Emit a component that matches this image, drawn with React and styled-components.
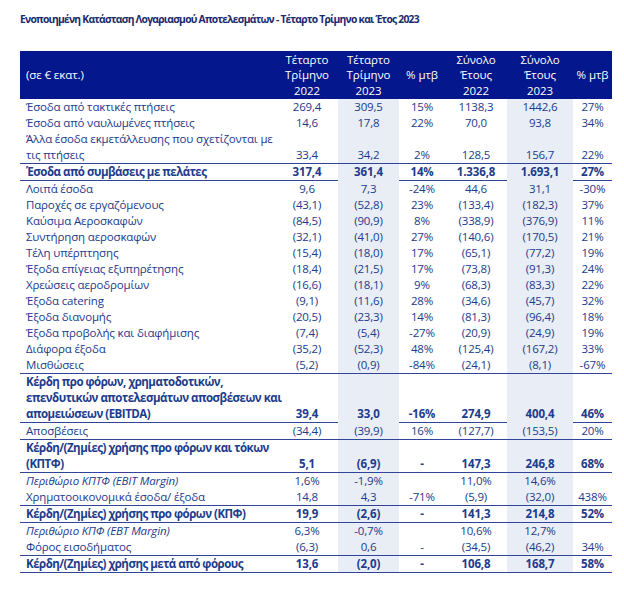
import React from 'react';
import styled, { createGlobalStyle } from 'styled-components';

const GlobalStyle = createGlobalStyle`
	body {
		margin: 0;
		background: #ffffff;
		font-family: "Open Sans", "Noto Sans", sans-serif;
	}
`;

const Page = styled.div`
	padding: 11px 12px 8px 20px;
	width: 592px;
`;

const Title = styled.h1`
	margin: 0 0 24px 0;
	font-size: 10.3px;
	line-height: 16px;
	font-weight: 700;
	letter-spacing: -0.75px;
	color: #1b2a6e;
`;

const Table = styled.table`
	width: 592px;
	border-collapse: collapse;
	table-layout: fixed;
	font-size: 11.5px;
	color: #213b8c;
`;

const HeadCell = styled.th`
	background: #04178c;
	color: #ffffff;
	font-weight: 400;
	line-height: 15.5px;
	letter-spacing: -0.1px;
	padding: 0;
	height: 48px;
	text-align: ${(p) => (p.$left ? 'left' : 'center')};
	padding-left: ${(p) => (p.$left ? '6px' : '0')};
	vertical-align: middle;
`;

const Row = styled.tr`
	font-weight: ${(p) => (p.$bold ? 700 : 400)};
`;

const LabelCell = styled.td`
	padding: 0 0 0 6px;
	line-height: 16px;
	letter-spacing: ${(p) => (p.$bold ? '-0.5px' : '-0.15px')};
	font-style: ${(p) => (p.$italic ? 'italic' : 'normal')};
	border-bottom: ${(p) => (p.$line ? '1.5px solid #30449a' : '0')};
	vertical-align: bottom;
	white-space: nowrap;
`;

const NumCell = styled.td`
	padding: 0;
	line-height: 16px;
	letter-spacing: -0.15px;
	text-align: center;
	vertical-align: bottom;
	background: ${(p) => (p.$shade ? '#e9edf6' : 'transparent')};
	border-bottom: ${(p) =>
		p.$line ? (p.$shade && p.$gap ? '1.5px solid #e9edf6' : '1.5px solid #30449a') : '0'};
`;

const columns = [256, 62, 61, 46, 62, 66, 39];
const shaded = [false, true, false, false, true, false];

const rows = [
	{ label: ['Έσοδα από τακτικές πτήσεις'], v: ['269,4', '309,5', '15%', '1138,3', '1442,6', '27%'] },
	{ label: ['Έσοδα από ναυλωμένες πτήσεις'], v: ['14,6', '17,8', '22%', '70,0', '93,8', '34%'] },
	{ label: ['Άλλα έσοδα εκμετάλλευσης που σχετίζονται με', 'τις πτήσεις'], v: ['33,4', '34,2', '2%', '128,5', '156,7', '22%'], line: true },
	{ label: ['Έσοδα από συμβάσεις με πελάτες'], v: ['317,4', '361,4', '14%', '1.336,8', '1.693,1', '27%'], bold: true, line: true, gap: true },
	{ label: ['Λοιπά έσοδα'], v: ['9,6', '7,3', '-24%', '44,6', '31,1', '-30%'] },
	{ label: ['Παροχές σε εργαζόμενους'], v: ['(43,1)', '(52,8)', '23%', '(133,4)', '(182,3)', '37%'] },
	{ label: ['Καύσιμα Αεροσκαφών'], v: ['(84,5)', '(90,9)', '8%', '(338,9)', '(376,9)', '11%'] },
	{ label: ['Συντήρηση αεροσκαφών'], v: ['(32,1)', '(41,0)', '27%', '(140,6)', '(170,5)', '21%'] },
	{ label: ['Τέλη υπέρπτησης'], v: ['(15,4)', '(18,0)', '17%', '(65,1)', '(77,2)', '19%'] },
	{ label: ['Έξοδα επίγειας εξυπηρέτησης'], v: ['(18,4)', '(21,5)', '17%', '(73,8)', '(91,3)', '24%'] },
	{ label: ['Χρεώσεις αεροδρομίων'], v: ['(16,6)', '(18,1)', '9%', '(68,3)', '(83,3)', '22%'] },
	{ label: ['Έξοδα catering'], v: ['(9,1)', '(11,6)', '28%', '(34,6)', '(45,7)', '32%'] },
	{ label: ['Έξοδα διανομής'], v: ['(20,5)', '(23,3)', '14%', '(81,3)', '(96,4)', '18%'] },
	{ label: ['Έξοδα προβολής και διαφήμισης'], v: ['(7,4)', '(5,4)', '-27%', '(20,9)', '(24,9)', '19%'] },
	{ label: ['Διάφορα έξοδα'], v: ['(35,2)', '(52,3)', '48%', '(125,4)', '(167,2)', '33%'] },
	{ label: ['Μισθώσεις'], v: ['(5,2)', '(0,9)', '-84%', '(24,1)', '(8,1)', '-67%'], line: true },
	{
		label: ['Κέρδη προ φόρων, χρηματοδοτικών,', 'επενδυτικών αποτελεσμάτων αποσβέσεων και', 'απομειώσεων (EBITDA)'],
		v: ['39,4', '33,0', '-16%', '274,9', '400,4', '46%'],
		bold: true,
		line: true,
		gap: true
	},
	{ label: ['Αποσβέσεις'], v: ['(34,4)', '(39,9)', '16%', '(127,7)', '(153,5)', '20%'], line: true },
	{ label: ['Κέρδη/(Ζημίες) χρήσης προ φόρων και τόκων', '(ΚΠΤΦ)'], v: ['5,1', '(6,9)', '-', '147,3', '246,8', '68%'], bold: true, line: true },
	{ label: ['Περιθώριο ΚΠΤΦ (EBIT Margin)'], v: ['1,6%', '-1,9%', '', '11,0%', '14,6%', ''], italic: true },
	{ label: ['Χρηματοοικονομικά έσοδα/ έξοδα'], v: ['14,8', '4,3', '-71%', '(5,9)', '(32,0)', '438%'], line: true },
	{ label: ['Κέρδη/(Ζημίες) χρήσης προ φόρων (ΚΠΦ)'], v: ['19,9', '(2,6)', '-', '141,3', '214,8', '52%'], bold: true, line: true },
	{ label: ['Περιθώριο ΚΠΦ (EBT Margin)'], v: ['6,3%', '-0,7%', '', '10,6%', '12,7%', ''], italic: true },
	{ label: ['Φόρος εισοδήματος'], v: ['(6,3)', '0,6', '-', '(34,5)', '(46,2)', '34%'], line: true },
	{ label: ['Κέρδη/(Ζημίες) χρήσης μετά από φόρους'], v: ['13,6', '(2,0)', '-', '106,8', '168,7', '58%'], bold: true, line: true }
];

const headers = [
	['Τέταρτο', 'Τρίμηνο', '2022'],
	['Τέταρτο', 'Τρίμηνο', '2023'],
	['% μτβ'],
	['Σύνολο', 'Έτους', '2022'],
	['Σύνολο', 'Έτους', '2023'],
	['% μτβ']
];

const Lines = ({ items }) =>
	items.map((t, i) => (
		<React.Fragment key={i}>
			{i > 0 && <br />}
			{t}
		</React.Fragment>
	));

export default function App() {
	return (
		<Page>
			<GlobalStyle />
			<Title>Ενοποιημένη Κατάσταση Λογαριασμού Αποτελεσμάτων - Τέταρτο Τρίμηνο και Έτος 2023</Title>
			<Table>
				<colgroup>
					{columns.map((w, i) => <col key={i} style={{ width: w }} />)}
				</colgroup>
				<thead>
					<tr>
						<HeadCell $left>(σε € εκατ.)</HeadCell>
						{headers.map((h, i) => (
							<HeadCell key={i}>
								<Lines items={h} />
							</HeadCell>
						))}
					</tr>
				</thead>
				<tbody>
					{rows.map((r, i) => (
						<Row key={i} $bold={r.bold}>
							<LabelCell $italic={r.italic} $bold={r.bold} $line={r.line}>
								<Lines items={r.label} />
							</LabelCell>
							{r.v.map((val, j) => (
								<NumCell key={j} $shade={shaded[j]} $line={r.line} $gap={r.gap}>
									{val}
								</NumCell>
							))}
						</Row>
					))}
				</tbody>
			</Table>
		</Page>
	);
}
